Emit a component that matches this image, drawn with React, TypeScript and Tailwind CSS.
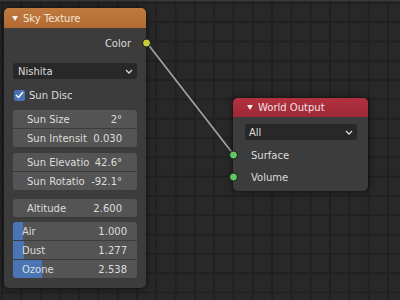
import React from "react";

function Chevron() {
  return (
    <svg width="8" height="5" viewBox="0 0 8 5" className="shrink-0">
      <polyline points="1,1 4,4 7,1" fill="none" stroke="#d8d8d8" strokeWidth="1.3" />
    </svg>
  );
}

function Tri() {
  return (
    <svg width="6" height="5" viewBox="0 0 6 5" className="shrink-0">
      <polygon points="0,0 6,0 3,5" fill="#f0f0f0" />
    </svg>
  );
}

function Socket({ color, side }: { color: string; side: "left" | "right" }) {
  return (
    <span
      className={
        "absolute top-1/2 -translate-y-1/2 h-[9px] w-[9px] rounded-full border border-[#1b1b1b] " +
        (side === "right" ? "right-[-5px]" : "left-[-4px]")
      }
      style={{ backgroundColor: color }}
    />
  );
}

function Field({ label, value, rounded }: { label: string; value: string; rounded: string }) {
  return (
    <div className={"flex h-[18px] items-center justify-between bg-[#545454] pl-[14px] pr-[15px] " + rounded}>
      <span>{label}</span>
      <span>{value}</span>
    </div>
  );
}

function Slider({ label, value, fill, rounded }: { label: string; value: string; fill: number; rounded: string }) {
  return (
    <div className={"relative flex h-[18px] items-center justify-between overflow-hidden bg-[#545454] pl-[9px] pr-[10px] " + rounded}>
      <div className="absolute left-0 top-0 h-full bg-[#4a74b4]" style={{ width: fill }} />
      <span className="relative">{label}</span>
      <span className="relative">{value}</span>
    </div>
  );
}

export default function App() {
  return (
    <main
      className="relative h-[300px] w-[400px] overflow-hidden bg-[#282828] bg-[linear-gradient(to_right,#202020_2px,transparent_2px),linear-gradient(to_bottom,#202020_2px,transparent_2px)] bg-size-[19.3px_19.3px] bg-position-[1px_2px] text-[10px] text-[#dddddd]"
      style={{ fontFamily: '"DejaVu Sans", sans-serif' }}
    >
      {/* top edge */}
      <div className="h-[1px] w-full bg-[#3a3a3a]" />

      {/* link */}
      <svg className="absolute inset-0" width="400" height="300">
        <line x1="147" y1="43" x2="234" y2="155" stroke="#1e1e1e" strokeWidth="3.5" />
        <line x1="147" y1="43" x2="234" y2="155" stroke="#9c9c9c" strokeWidth="2" />
      </svg>

      {/* Sky Texture */}
      <div className="absolute left-[4px] top-[8px] flex h-[280px] w-[142px] flex-col rounded-[5px] bg-[#3c3c3c] shadow-[0_0_6px_rgba(0,0,0,0.7)]">
        <div className="flex h-[20px] items-center gap-[5px] rounded-t-[5px] bg-[linear-gradient(to_bottom,#c07a3e,#b26a32)] pl-[8px] text-[#f2e6da]">
          <Tri />
          <span>Sky Texture</span>
        </div>

        <div className="relative mt-[7px] flex h-[16px] items-center justify-end pr-[15px]">
          <span>Color</span>
          <Socket color="#c8cc3a" side="right" />
        </div>

        <div className="mx-[9px] mt-[12px] flex h-[16px] items-center justify-between rounded-[3px] bg-[#282828] pl-[5px] pr-[4px]">
          <span>Nishita</span>
          <Chevron />
        </div>

        <div className="mt-[10px] flex h-[12px] items-center gap-[4px] pl-[10px]">
          <span className="flex h-[11px] w-[11px] items-center justify-center rounded-[2px] bg-[#4772b3]">
            <svg width="9" height="8" viewBox="0 0 9 8">
              <polyline points="1,4 3.5,6.5 8,1" fill="none" stroke="#ffffff" strokeWidth="1.5" />
            </svg>
          </span>
          <span>Sun Disc</span>
        </div>

        <div className="mx-[9px] mt-[9px] flex flex-col gap-[1px]">
          <Field label="Sun Size" value="2°" rounded="rounded-t-[3px]" />
          <Field label="Sun Intensit" value="0.030" rounded="rounded-b-[3px]" />
        </div>

        <div className="mx-[9px] mt-[6px] flex flex-col gap-[1px]">
          <Field label="Sun Elevatio" value="42.6°" rounded="rounded-t-[3px]" />
          <Field label="Sun Rotatio" value="-92.1°" rounded="rounded-b-[3px]" />
        </div>

        <div className="mx-[9px] mt-[9px]">
          <Field label="Altitude" value="2.600" rounded="rounded-[3px]" />
        </div>

        <div className="mx-[9px] mt-[5px] flex flex-col gap-[1px]">
          <Slider label="Air" value="1.000" fill={10} rounded="rounded-t-[3px]" />
          <Slider label="Dust" value="1.277" fill={11} rounded="" />
          <Slider label="Ozone" value="2.538" fill={29} rounded="rounded-b-[3px]" />
        </div>
      </div>

      {/* World Output */}
      <div className="absolute left-[233px] top-[98px] flex h-[93px] w-[135px] flex-col rounded-[5px] bg-[#3c3c3c] shadow-[0_0_6px_rgba(0,0,0,0.7)]">
        <div className="flex h-[19px] items-center gap-[5px] rounded-t-[5px] bg-[linear-gradient(to_bottom,#b3313f,#9e2836)] pl-[14px] text-[#f0e0e0]">
          <Tri />
          <span>World Output</span>
        </div>

        <div className="ml-[12px] mr-[11px] mt-[7px] flex h-[16px] items-center justify-between rounded-[3px] bg-[#282828] pl-[4px] pr-[4px]">
          <span>All</span>
          <Chevron />
        </div>

        <div className="relative mt-[7px] flex h-[16px] items-center pl-[18px]">
          <Socket color="#63c763" side="left" />
          <span>Surface</span>
        </div>
        <div className="relative mt-[6px] flex h-[16px] items-center pl-[18px]">
          <Socket color="#63c763" side="left" />
          <span>Volume</span>
        </div>
      </div>
    </main>
  );
}
